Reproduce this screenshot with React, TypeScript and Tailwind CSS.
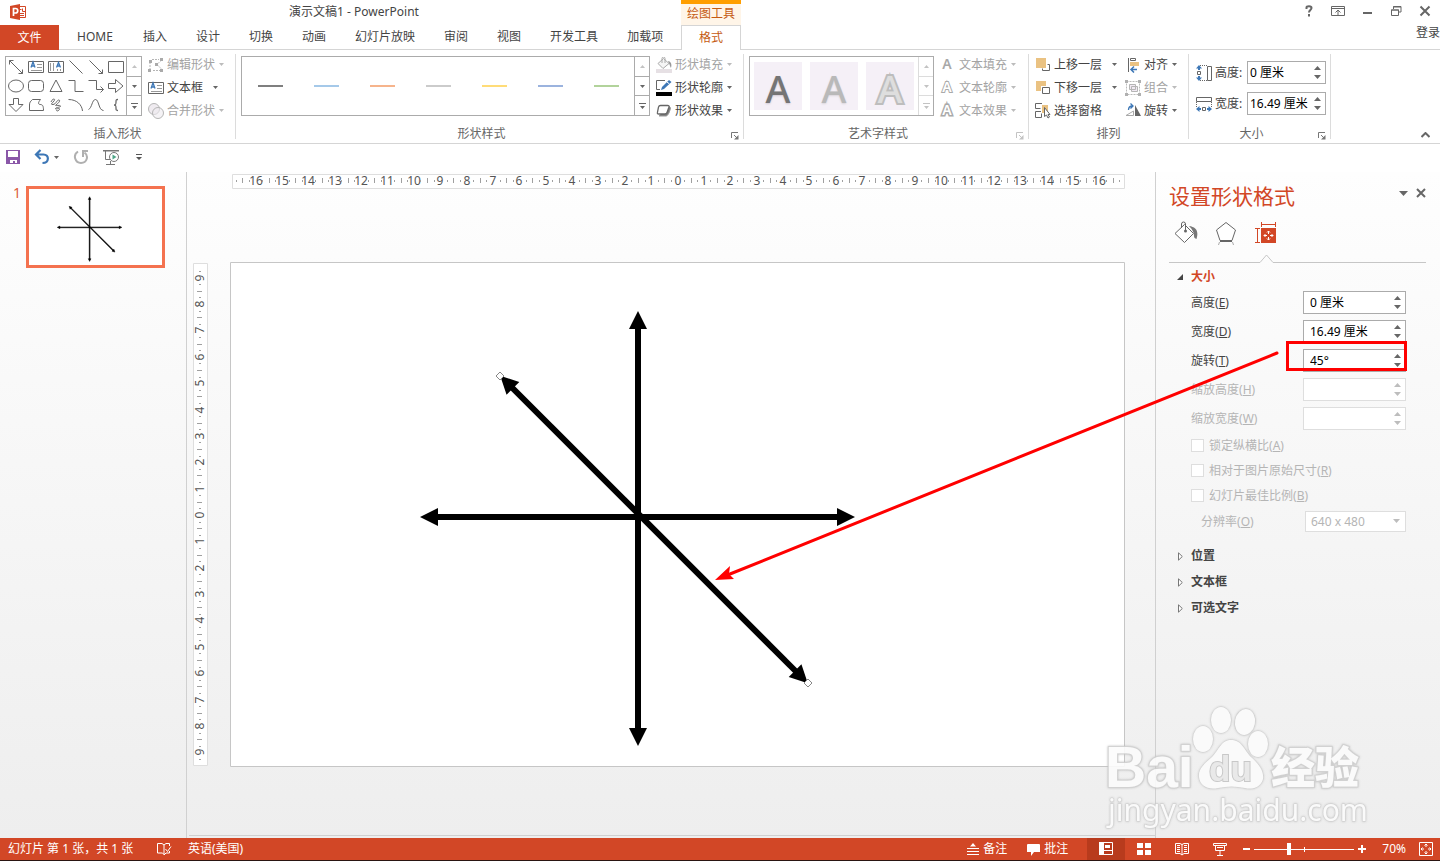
import { useState } from "react";
import type { ReactNode } from "react";

/* ---------- small shared pieces ---------- */

const Caret = ({ disabled }: { disabled?: boolean }) => (
  <svg width="5" height="3" viewBox="0 0 5 3" className={disabled ? "text-[#bcbcbc]" : "text-[#666]"}>
    <path d="M0 0h5L2.5 3z" fill="currentColor" />
  </svg>
);

interface ToolButtonProps {
  icon: ReactNode;
  label: string;
  disabled?: boolean;
  menu?: boolean;
  wide?: boolean;
}

const ToolButton = ({ icon, label, disabled, menu = true, wide }: ToolButtonProps) => (
  <button
    type="button"
    disabled={disabled}
    className={`flex h-[23px] items-center whitespace-nowrap ${disabled ? "text-[#a3a3a3]" : "text-[#444]"}`}
  >
    <span className="mr-[3px] flex w-4 justify-center">{icon}</span>
    <span>{label}</span>
    {menu && (
      <span className={wide ? "ml-2.5" : "ml-1"}>
        <Caret disabled={disabled} />
      </span>
    )}
  </button>
);

const Launcher = ({ disabled }: { disabled?: boolean }) => (
  <button type="button" aria-label="更多选项" disabled={disabled} className="flex w-4 items-center justify-center pt-1">
    <svg width="8" height="8" viewBox="0 0 8 8" fill="none" stroke={disabled ? "#c3c3c3" : "#777"}>
      <path d="M.5 6V.5H7M3 3l3 3" />
      <path d="M7.500 3v4.500H3z" fill={disabled ? "#c3c3c3" : "#777"} stroke="none" />
    </svg>
  </button>
);

interface GroupProps {
  title: string;
  className: string;
  launcher?: "on" | "off";
  children: ReactNode;
}

const Group = ({ title, className, launcher, children }: GroupProps) => (
  <>
    <section className={`flex shrink-0 flex-col ${className}`}>
      <div className="flex h-[74px] items-start pl-[5px]">{children}</div>
      <div className="flex h-[19px]">
        <h2 className="flex flex-1 items-center justify-center text-[#666]">{title}</h2>
        {launcher && <Launcher disabled={launcher === "off"} />}
      </div>
    </section>
    <div className="my-1 w-px shrink-0 bg-[#dcdcdc]" />
  </>
);

const scrollCell = "flex flex-1 items-center justify-center";

const GalleryScroll = ({ disabled }: { disabled?: boolean }) => {
  const line = disabled ? "border-[#dcdcdc]" : "border-[#ababab]";
  const fill = disabled ? "#c3c3c3" : "#666";
  return (
    <div className={`flex w-[15px] shrink-0 flex-col border-l ${line}`}>
      <button type="button" aria-label="上一行" disabled className={scrollCell}>
        <svg width="5" height="3" viewBox="0 0 5 3">
          <path d="M0 3h5L2.500 0z" fill="#c3c3c3" />
        </svg>
      </button>
      <button type="button" aria-label="下一行" disabled={disabled} className={`border-y ${scrollCell} ${line}`}>
        <svg width="5" height="3" viewBox="0 0 5 3">
          <path d="M0 0h5L2.500 3z" fill={fill} />
        </svg>
      </button>
      <button type="button" aria-label="其他" disabled={disabled} className={scrollCell}>
        <svg width="7" height="6" viewBox="0 0 7 6" fill={fill}>
          <path d="M0 0h7v1H0zM1 3h5L3.500 6z" />
        </svg>
      </button>
    </div>
  );
};

interface SpinnerProps {
  id: string;
  label: string;
  initial: string;
  disabled?: boolean;
  size: string;
}

const Spinner = ({ id, label, initial, disabled, size }: SpinnerProps) => {
  const [value, setValue] = useState(initial);
  const color = disabled ? "text-[#bdbdbd]" : "text-[#666]";
  return (
    <div className={`flex h-[23px] border bg-white ${size} ${disabled ? "border-[#dedede]" : "border-[#ababab]"}`}>
      <input
        id={id}
        value={value}
        disabled={disabled}
        onChange={(e) => setValue(e.target.value)}
        className="min-w-0 flex-1 bg-transparent text-black outline-none"
      />
      <div className={`flex w-4 flex-col items-center justify-center gap-[5px] ${color}`}>
        <button type="button" aria-label={`${label} 增加`} disabled={disabled}>
          <svg width="7" height="4" viewBox="0 0 7 4" className="block">
            <path d="M0 4h7L3.500 0z" fill="currentColor" />
          </svg>
        </button>
        <button type="button" aria-label={`${label} 减少`} disabled={disabled}>
          <svg width="7" height="4" viewBox="0 0 7 4" className="block">
            <path d="M0 0h7L3.500 4z" fill="currentColor" />
          </svg>
        </button>
      </div>
    </div>
  );
};

/* ---------- icons ---------- */

const Svg = ({ children }: { children: ReactNode }) => (
  <svg width="16" height="16" viewBox="0 0 16 16" fill="none" stroke="#666" className="block">
    {children}
  </svg>
);

const letterA = "M3 8.500l2-5.500 2 5.500M3.800 7h2.500";

const TextBoxIcon = () => (
  <Svg>
    <path d="M.5 2.500h15v11H.5z" fill="#fff" />
    <path d={letterA} stroke="#3d77b6" strokeWidth="1.300" />
    <path d="M9 5.500h5M9 8.500h5M3 11.500h11" stroke="#999" />
  </Svg>
);

const shapes: { name: string; art: ReactNode }[] = [
  { name: "双箭头", art: <path d="M1.500 1.500l13 13M1.500 5.500v-4h4M14.500 10.500v4h-4" /> },
  {
    name: "文本框",
    art: (
      <>
        <path d="M.5 2.500h15v11H.5z" />
        <path d={letterA} stroke="#3d77b6" strokeWidth="1.300" />
        <path d="M9 5.500h5M9 8.500h5M3 11.500h11" stroke="#999" />
      </>
    ),
  },
  {
    name: "竖排文本框",
    art: (
      <>
        <path d="M.5 2.500h15v11H.5z" />
        <path d="M8.500 8.500l2-5 2 5M9.300 7h2.500" stroke="#3d77b6" strokeWidth="1.300" />
        <path d="M2.500 4v8M5.500 4v8M9.500 10v2M12.500 10v2" stroke="#999" />
      </>
    ),
  },
  { name: "直线", art: <path d="M1.500 1.500l13 13" /> },
  { name: "箭头", art: <path d="M1.500 1.500l13 13M14.500 10.500v4h-4" /> },
  { name: "矩形", art: <path d="M.5 2.500h15v11H.5z" /> },
  { name: "椭圆", art: <ellipse cx="8" cy="8" rx="7.500" ry="6" /> },
  { name: "圆角矩形", art: <rect x=".5" y="2.500" width="15" height="11" rx="3" /> },
  { name: "三角形", art: <path d="M8 2L14 13.500H2z" /> },
  { name: "肘形连接符", art: <path d="M.5 2.500H7v11h8.500" /> },
  { name: "肘形箭头", art: <path d="M.5 2.500h8v9h7M12.500 8.500l3 3-3 3" /> },
  { name: "右箭头", art: <path d="M.5 5.500h7v-4L15 8l-7.500 6.500v-4h-7z" /> },
  { name: "下箭头", art: <path d="M5.500 1.500h5v6H15L8 14.500 1 7.500h4.500z" /> },
  {
    name: "任意多边形",
    art: <path d="M4.500 2.500h8c-2 2.500-3 4.500-.5 5 2.500 0 3.500 1 3.500 6H1.500V8c0-3 1-3.500 3-5.500z" />,
  },
  {
    name: "自由曲线",
    art: <path d="M3 5c1.500-4 5-3.500 3-1s-4 3.500-1 3.500 4-5 6-4.500-1 3.500-3 5 4-.5 4.500 1-4.500 1-5 2.500 4-1 4 .5-3 3-3 1" />,
  },
  { name: "弧形", art: <path d="M.5 2.500C9 2.500 14 8 14.500 14" /> },
  { name: "曲线", art: <path d="M.5 12.500C4 11 4 2.500 7.500 2.500s3 11 8 11" /> },
  { name: "左大括号", art: <path d="M10 2.500c-2 0-2 .5-2 2.500s0 3-2 3c2 0 2 1 2 3s0 2.500 2 2.500" strokeWidth="1.300" /> },
];

const EditShapeIcon = () => (
  <Svg>
    <path d="M2 5v7M4 2.500h7M5 13.500h7M13.500 3L9 7.500l5 5" stroke="#b5b5b5" strokeDasharray="2 1" />
    <path d="M1 3h3v3H1zM12 1h3v3h-3zM0 12h3v3H0zM12 12h3v3h-3zM7 6h3v3H7z" fill="#aaa" stroke="none" />
  </Svg>
);

const MergeIcon = () => (
  <Svg>
    <circle cx="6" cy="6" r="5.500" fill="#efebf0" stroke="#b5b5b5" />
    <circle cx="10" cy="10" r="5.500" fill="#efebf0" fillOpacity=".6" stroke="#b5b5b5" />
  </Svg>
);

const FillIcon = () => (
  <Svg>
    <path d="M7.500 1.500l5.500 5-6 5-5-5z" stroke="#aaa" fill="#f5f5f5" />
    <path d="M6 6V1.500a1.500 1.500 0 013 0V6" stroke="#aaa" />
    <path d="M12 4c3 .5 4 3 3 7-1-1.500-1.500-4-3-7z" fill="#999" stroke="none" />
    <path d="M0 12h16v4H0z" fill="#e6e0e4" stroke="none" />
  </Svg>
);

const OutlineIcon = () => (
  <Svg>
    <path d="M9 .5H.5v9H4" />
    <path d="M5 10l1-3 7-7 2.500 2L8 9z" fill="#3d77b6" stroke="none" />
    <path d="M11 2l2.500 2" stroke="#fff" />
    <path d="M0 12h16v4H0z" fill="#000" stroke="none" />
  </Svg>
);

const EffectIcon = () => (
  <Svg>
    <path d="M3 13h7c2 0 4-5 4.500-8L13 3z" fill="#777" stroke="#999" />
    <path d="M4.500 2.500h7c1.500 0 1.800.6 1.400 1.800l-1.800 5c-.4 1.200-1 1.700-2.200 1.700h-6c-1.500 0-1.800-.6-1.400-1.800l1-5c.3-1.200.8-1.700 2-1.700z" fill="#fff" strokeWidth="1.300" />
  </Svg>
);

const TextArtIcon = ({ variant }: { variant: "fill" | "outline" | "effect" }) => (
  <svg width="14" height="14" viewBox="0 0 14 14" className="block overflow-visible">
    <text
      x="6"
      y="11"
      fontSize="14"
      textAnchor="middle"
      fontWeight="600"
      paintOrder="stroke"
      fill={variant === "fill" ? "#a8a8a8" : "#fff"}
      stroke={variant === "fill" ? "none" : "#aaa"}
      strokeWidth={variant === "effect" ? 3 : 2}
    >
      A
    </text>
  </svg>
);

const ForwardIcon = () => (
  <Svg>
    <path d="M12.500 7.500h2v6h-7v-2" />
    <path d="M1 1h10v10H1z" fill="#eac282" stroke="none" />
  </Svg>
);

const BackwardIcon = () => (
  <Svg>
    <path d="M1 1h10v5H6v5H1z" fill="#eac282" stroke="none" />
    <path d="M7.500 7.500h7v6h-7z" fill="#fff" />
  </Svg>
);

const SelectPaneIcon = () => (
  <Svg>
    <path d="M7 2h6v8H7z" fill="#eac282" stroke="none" />
    <path d="M7 .5H.5v5h5M6 8.500H.5v6h6v-4" />
    <path d="M9.500 4.500v9l2-1.500 1.500 3 1.500-1-1.500-2.500H15z" fill="#fff" />
  </Svg>
);

const AlignIcon = () => (
  <Svg>
    <path d="M3.500 1v14M5.500 1.500h5v2h-5z" />
    <path d="M5 5h9v4H5z" fill="#eac282" stroke="none" />
    <path d="M12 12.500H6.500M9 9.500l-3 3 3 3" stroke="#3d77b6" strokeWidth="1.500" />
  </Svg>
);

const CombineIcon = () => (
  <Svg>
    <path d="M1.500 1.500h13v13h-13z" stroke="#bbb" strokeDasharray="2 1" />
    <path d="M4.500 4.500h6v5h-6zM6.500 6.500h6v5h-6z" fill="#f1e9f3" stroke="#b5b5b5" />
    <path d="M0 0h3v3H0zM13 0h3v3h-3zM0 13h3v3H0zM13 13h3v3h-3z" fill="#b0b0b0" stroke="none" />
  </Svg>
);

const RotateIcon = () => (
  <Svg>
    <path d="M10 13V2l6 11z" fill="#666" stroke="none" />
    <path d="M8.500 8v4.500H1z" stroke="#aaa" />
    <path d="M3.500 7c0-3 1-4 4-4M5.500.5L8 3 5.500 5.500" stroke="#3d77b6" strokeWidth="1.300" />
  </Svg>
);

const HeightIcon = () => (
  <Svg>
    <path d="M11.500 1.500h4v14h-4z" />
    <path d="M4 .5h7M4 15.500h7" strokeDasharray="1 1" />
    <path d="M1.500 6.500h3v3h-3z" />
    <path d="M3 0l3 3.500H4V5H2V3.500H0zM3 16l3-3.500H4V11H2v1.500H0z" fill="#3d77b6" stroke="none" />
  </Svg>
);

const WidthIcon = () => (
  <Svg>
    <path d="M.5 1.500h15v4H.5z" />
    <path d="M.5 6v6M15.500 6v6" strokeDasharray="1 1" />
    <path d="M6.500 11.500h3v3h-3z" />
    <path d="M0 13l3.500-3v2H5v2H3.500v2zM16 13l-3.500-3v2H11v2h1.500v2z" fill="#3d77b6" stroke="none" />
  </Svg>
);

/* ---------- title bar and tabs ---------- */

const windowButtons: { name: string; art: ReactNode }[] = [
  {
    name: "帮助",
    art: <path d="M5.500 6V4.500C5.500 3 10.500 2.500 10.500 5c0 2-2.500 2-2.500 4.500M8 11v2.500" strokeWidth="2" />,
  },
  {
    name: "功能区显示选项",
    art: <path d="M1.500 3.500h13v9h-13zM1.500 5.500h13M8 12V7.500M5.500 9.500L8 7l2.500 2.500" />,
  },
  { name: "最小化", art: <path d="M4 10h9" strokeWidth="2" /> },
  { name: "还原", art: <path d="M3.500 7h7v5.500h-7zM3 7h8M5.500 6V3.500h7.500V9h-2M5 4h8" /> },
  { name: "关闭", art: <path d="M3.500 3.500l9 9M12.500 3.500l-9 9" strokeWidth="2" /> },
];

const tabs = ["插入", "设计", "切换", "动画", "幻灯片放映", "审阅", "视图", "开发工具", "加载项"];

const Header = () => (
  <header>
    <div className="flex h-[25px]">
      <div className="flex w-[681px] shrink-0 items-center pb-0.5 pl-[10px]">
        <svg width="17" height="16" viewBox="0 0 17 16">
          <path d="M9 2.500h6.500v11H9" fill="#fff" stroke="#d24726" />
          <path d="M10 5.500h1.500M12.500 4.500v3H15M10 9.500h4M10 11.500h4" fill="none" stroke="#d24726" />
          <path d="M0 2l10-2v16L0 14z" fill="#d24726" />
          <path d="M3.500 12V4.500h2a2 2 0 010 4.500h-2" fill="none" stroke="#fff" strokeWidth="1.700" />
        </svg>
        <h1 className="flex-1 text-center text-[#444]">演示文稿1 - PowerPoint</h1>
      </div>
      <div className="flex w-[60px] shrink-0 items-center justify-center border-t-4 border-[#ff9e00] bg-[#fff5e8] pb-0.5 text-[#c55a11]">
        绘图工具
      </div>
      <div className="mr-px ml-auto flex h-[22px]">
        {windowButtons.map((b) => (
          <button key={b.name} type="button" aria-label={b.name} className="flex w-[29px] items-center justify-center">
            <svg width="16" height="16" viewBox="0 0 16 16" fill="none" stroke="#666">
              {b.art}
            </svg>
          </button>
        ))}
      </div>
    </div>
    <nav className="flex h-[25px] text-[#444]">
      <div className="flex w-[681px] shrink-0 items-stretch gap-[29px] border-b border-[#d5d5d5]">
        <button type="button" className="-mr-3 -mb-px w-[59px] bg-[#d24726] text-white">
          文件
        </button>
        <button type="button" className="w-[38px]">
          HOME
        </button>
        {tabs.map((t) => (
          <button key={t} type="button" className="whitespace-nowrap">
            {t}
          </button>
        ))}
      </div>
      <button type="button" className="w-[60px] shrink-0 border-x border-t border-[#d5d5d5] text-[#c55a11]">
        格式
      </button>
      <div className="flex flex-1 items-start justify-end border-b border-[#d5d5d5]">
        <a href="#signin">登录</a>
      </div>
    </nav>
  </header>
);

/* ---------- ribbon ---------- */

const lineStyles = [
  "bg-[#7f7f7f]",
  "bg-[#a5c9e9]",
  "bg-[#f6b48c]",
  "bg-[#cbcbcb]",
  "bg-[#ffdc78]",
  "bg-[#9bb3de]",
  "bg-[#b2d39b]",
];

const artStyles = [
  "text-[#757575] [text-shadow:0_1px_2px_#d0c8d2]",
  "text-[#b9b9b9] [text-shadow:0_1px_2px_#d8d4da]",
  "text-[#dedede] [-webkit-text-stroke:4px_#bdbdbd] [paint-order:stroke_fill]",
];

const Ribbon = () => (
  <div className="flex h-[94px] border-b border-[#d5d5d5]">
    <Group title="插入形状" className="w-[235px]">
      <div className="mt-1.5 mr-1.5 flex h-[60px] w-[137px] border border-[#ababab]">
        <div className="grid flex-1 grid-cols-6 place-items-center">
          {shapes.map((s) => (
            <button key={s.name} type="button" aria-label={s.name}>
              <Svg>{s.art}</Svg>
            </button>
          ))}
        </div>
        <GalleryScroll />
      </div>
      <div className="mt-[3px]">
        <ToolButton icon={<EditShapeIcon />} label="编辑形状" disabled />
        <ToolButton icon={<TextBoxIcon />} label="文本框" wide />
        <ToolButton icon={<MergeIcon />} label="合并形状" disabled />
      </div>
    </Group>

    <Group title="形状样式" className="w-[507px]" launcher="on">
      <div className="mt-1.5 mr-1.5 flex h-[60px] w-[409px] border border-[#ababab]">
        <div className="grid flex-1 grid-cols-7 place-items-center">
          {lineStyles.map((color, i) => (
            <button key={color} type="button" aria-label={`线条样式 ${i + 1}`} className={`h-0.5 w-[25px] ${color}`} />
          ))}
        </div>
        <GalleryScroll />
      </div>
      <div className="mt-[3px]">
        <ToolButton icon={<FillIcon />} label="形状填充" disabled />
        <ToolButton icon={<OutlineIcon />} label="形状轮廓" />
        <ToolButton icon={<EffectIcon />} label="形状效果" />
      </div>
    </Group>

    <Group title="艺术字样式" className="w-[284px]" launcher="off">
      <div className="mt-1.5 mr-1.5 flex h-[60px] w-[185px] border border-[#ababab]">
        <div className="flex flex-1 items-center gap-2 pl-1">
          {artStyles.map((style) => (
            <button
              key={style}
              type="button"
              disabled
              className={`h-12 w-12 bg-[#f5f0f7] pt-1 text-[38px] leading-[44px] font-medium ${style}`}
            >
              A
            </button>
          ))}
        </div>
        <GalleryScroll disabled />
      </div>
      <div className="mt-[3px]">
        <ToolButton icon={<TextArtIcon variant="fill" />} label="文本填充" disabled />
        <ToolButton icon={<TextArtIcon variant="outline" />} label="文本轮廓" disabled />
        <ToolButton icon={<TextArtIcon variant="effect" />} label="文本效果" disabled />
      </div>
    </Group>

    <Group title="排列" className="w-[159px]">
      <div className="mt-[3px] pl-px">
        <ToolButton icon={<ForwardIcon />} label="上移一层" wide />
        <ToolButton icon={<BackwardIcon />} label="下移一层" wide />
        <ToolButton icon={<SelectPaneIcon />} label="选择窗格" menu={false} />
      </div>
      <div className="mt-[3px] ml-2">
        <ToolButton icon={<AlignIcon />} label="对齐" />
        <ToolButton icon={<CombineIcon />} label="组合" disabled />
        <ToolButton icon={<RotateIcon />} label="旋转" />
      </div>
    </Group>

    <Group title="大小" className="w-[141px]" launcher="on">
      <div className="mt-[11px] flex flex-col gap-2 pl-0.5 text-[#444]">
        <div className="flex items-center">
          <HeightIcon />
          <label htmlFor="ribbon-height" className="ml-[3px] w-8">
            高度:
          </label>
          <Spinner id="ribbon-height" label="高度" initial="0 厘米" size="w-[79px] pl-[2px]" />
        </div>
        <div className="flex items-center">
          <WidthIcon />
          <label htmlFor="ribbon-width" className="ml-[3px] w-8">
            宽度:
          </label>
          <Spinner id="ribbon-width" label="宽度" initial="16.49 厘米" size="w-[79px] pl-[2px]" />
        </div>
      </div>
    </Group>

    <div className="flex flex-1 items-end justify-end">
      <button type="button" aria-label="折叠功能区" className="flex h-4 w-[29px] items-center justify-center">
        <svg width="9" height="6" viewBox="0 0 9 6" fill="none" stroke="#666" strokeWidth="2">
          <path d="M.5 5l4-4 4 4" />
        </svg>
      </button>
    </div>
  </div>
);

const QuickAccess = () => (
  <div className="flex h-7 items-center pb-0.5 pl-[5px]">
    <button type="button" aria-label="保存">
      <Svg>
        <path d="M1 1h14v14H1z" fill="#8a57a8" stroke="none" />
        <path d="M3 2h10v6H3zM5 11h7v3h-2v-2H8v2H5z" fill="#fff" stroke="none" />
      </Svg>
    </button>
    <button type="button" aria-label="撤消" className="ml-[13px] flex items-center gap-1">
      <svg width="16" height="16" viewBox="0 0 16 16" fill="none" stroke="#3d77b6" strokeWidth="2.200">
        <path d="M6.500 1L2 5.500 6.500 10M2 5.500h7.500c6 0 6 8.500-1 8.500" />
      </svg>
      <Caret />
    </button>
    <button type="button" aria-label="重复" className="ml-[14px]">
      <svg width="16" height="16" viewBox="0 0 16 16" fill="none" stroke="#b0b0b0" strokeWidth="2">
        <path d="M5 2.500C-.5 6 2 14 8 14s8-7 3.500-10.500M10 8V2h5" />
      </svg>
    </button>
    <button type="button" aria-label="从头开始放映" className="ml-[14px]">
      <svg width="17" height="16" viewBox="0 0 17 16" fill="none" stroke="#777">
        <path d="M0 1h16v1.500H0z" fill="#777" stroke="none" />
        <path d="M2.500 2v8.500h5M3 15.500h9M7.500 15V12" />
        <circle cx="11" cy="8" r="4.500" fill="#fff" />
        <path d="M9.500 5.500v5L13.500 8z" fill="#4ea587" stroke="none" />
      </svg>
    </button>
    <button type="button" aria-label="自定义快速访问工具栏" className="ml-4">
      <svg width="6" height="7" viewBox="0 0 6 7" fill="#555">
        <path d="M0 0h6v1H0zM0 3h6L3 6z" />
      </svg>
    </button>
  </div>
);

/* ---------- slide and rulers ---------- */

const axes = [
  { x: 408, y: 266.5, angle: 90 },
  { x: 407.5, y: 255, angle: 0 },
  { x: 424, y: 267.5, angle: 45 },
];

const SlideDrawing = () => (
  <>
    {axes.map((a) => (
      <g key={a.angle} transform={`translate(${a.x} ${a.y}) rotate(${a.angle})`}>
        <path d="M-204-3H204V3H-204z" />
        <path d="M-217.500 0l18-9v18zM217.500 0l-18-9v18z" />
      </g>
    ))}
  </>
);

const CM = 26.37;

interface RulerProps {
  length: number;
  max: number;
  vertical?: boolean;
}

const Ruler = ({ length, max, vertical }: RulerProps) => {
  const center = vertical ? 252 : 445.5;
  const marks = Array.from({ length: (max * 2 + 2) * 4 + 1 }, (_, i) => i / 4 - max - 1);
  return (
    <svg
      viewBox={vertical ? `0 0 15 ${length}` : `0 0 ${length} 15`}
      className="block w-full overflow-visible"
      fill="#555"
      fontSize="12"
      textAnchor="middle"
    >
      <path d={vertical ? `M.5.5h14v${length - 1}H.5z` : `M.5.5h${length - 1}v14H.5z`} fill="#fff" stroke="#dedede" />
      {marks.map((m) => {
        const pos = Math.round(center + m * CM);
        if (pos < 2 || pos > length - 2) return null;
        if (Number.isInteger(m)) {
          return vertical ? (
            <text key={m} transform={`translate(11 ${pos}) rotate(-90)`}>
              {Math.abs(m)}
            </text>
          ) : (
            <text key={m} x={pos} y="11">
              {Math.abs(m)}
            </text>
          );
        }
        const half = Math.abs(m % 1) === 0.5;
        const size = half ? 5 : 2;
        const start = half ? 4 : 6;
        return vertical ? (
          <rect key={m} x={start} y={pos} width={size} height="1" fill="#a0a0a0" />
        ) : (
          <rect key={m} x={pos} y={start} width="1" height={size} fill="#a0a0a0" />
        );
      })}
    </svg>
  );
};

const Workspace = () => (
  <main className="min-w-0 flex-1 pb-0.5 pl-0.5">
    <div className="flex h-full flex-col gap-[73px] border-b border-[#d0d0d0] pt-0.5 pr-[30px] pl-1">
      <div className="pl-[39px]">
        <Ruler length={893} max={16} />
      </div>
      <div className="flex items-start gap-[22px]">
        <div className="w-[15px] shrink-0 pt-px">
          <Ruler length={503} max={9} vertical />
        </div>
        <svg viewBox="0 0 895 505" className="block min-w-0 flex-1">
          <path d="M.5.5h894v504H.5z" fill="#fff" stroke="#c6c6c6" />
          <SlideDrawing />
          <path d="M270 110l4 4-4 4-4-4zM578 417l4 4-4 4-4-4z" fill="#fff" stroke="#888" />
        </svg>
      </div>
    </div>
  </main>
);

const Thumbnails = () => (
  <aside className="flex w-[187px] shrink-0 items-start border-r border-[#d0d0d0] pt-[14px] pl-[13px]">
    <span className="w-[13px] text-sm leading-[14px] text-[#dc5b3c]">1</span>
    <button type="button" aria-label="幻灯片 1" className="border-3 border-[#f4724f] bg-white">
      <svg width="133" height="76" viewBox="0 0 895 505" className="block" stroke="#000" strokeWidth="3">
        <SlideDrawing />
      </svg>
    </button>
  </aside>
);

/* ---------- format pane ---------- */

interface Field {
  id: string;
  label: string;
  hotkey: string;
  value: string;
  disabled?: boolean;
  marked?: boolean;
}

const fields: Field[] = [
  { id: "height", label: "高度", hotkey: "E", value: "0 厘米" },
  { id: "width", label: "宽度", hotkey: "D", value: "16.49 厘米" },
  { id: "rotation", label: "旋转", hotkey: "T", value: "45°", marked: true },
  { id: "scale-height", label: "缩放高度", hotkey: "H", value: "", disabled: true },
  { id: "scale-width", label: "缩放宽度", hotkey: "W", value: "", disabled: true },
];

const checks = [
  { id: "lock-ratio", label: "锁定纵横比", hotkey: "A" },
  { id: "relative", label: "相对于图片原始尺寸", hotkey: "R" },
  { id: "best-scale", label: "幻灯片最佳比例", hotkey: "B" },
];

const Hotkey = ({ text, hotkey }: { text: string; hotkey: string }) => (
  <>
    {text}(<u>{hotkey}</u>)
  </>
);

const FormatPane = () => (
  <aside className="w-[285px] shrink-0 border-l border-[#d0d0d0] pr-[14px] pl-[13px] text-[#444]">
    <div className="mt-1 flex h-10 items-center justify-between">
      <h2 className="text-[21px] leading-10 text-[#d24726]">设置形状格式</h2>
      <div className="mb-1.5 flex items-center gap-2 pl-px">
        <button type="button" aria-label="任务窗格选项">
          <svg width="9" height="5" viewBox="0 0 9 5" className="block" fill="#666">
            <path d="M0 0h9L4.500 5z" />
          </svg>
        </button>
        <button type="button" aria-label="关闭窗格">
          <svg width="10" height="10" viewBox="0 0 10 10" className="block" stroke="#666" strokeWidth="2">
            <path d="M1 1l8 8M9 1L1 9" />
          </svg>
        </button>
      </div>
    </div>
    <div className="mt-1 flex h-[26px] items-center gap-4 pl-[5px]">
      <button type="button" aria-label="填充与线条">
        <svg width="24" height="24" viewBox="0 0 24 24" fill="none" stroke="#666">
          <path d="M10.500 3.500l9 9-9 9-9.500-9z" fill="#fff" />
          <path d="M7.500 7V3a2 2 0 014 0v6" />
          <circle cx="11.500" cy="10" r="1.500" fill="#666" stroke="none" />
          <path d="M15 5c7 1 10 5 7.500 13-1.500-.5-2.500-1-2.500-3 0-3-1-6-5-10z" fill="#777" stroke="none" />
        </svg>
      </button>
      <button type="button" aria-label="效果">
        <svg width="24" height="24" viewBox="0 0 24 24" fill="none" stroke="#666">
          <path d="M12 1.500l9.500 7.500-3.500 10.500H6L2.500 9z" fill="#fff" />
          <path d="M6 20h12" strokeWidth="2" />
          <path d="M5.500 21l-1 3M18.500 21l1 3" stroke="#aaa" />
        </svg>
      </button>
      <button type="button" aria-label="大小与属性">
        <svg width="24" height="24" viewBox="0 0 24 24" fill="none" stroke="#d24726">
          <path d="M7 7h15v15H7z" fill="#d24726" stroke="none" />
          <path d="M7.500 1v5M21.500 1v5M8 3.500h13M1 7.500h5M1 21.500h5M3.500 8v13" />
          <path
            d="M14.500 10v3M14.500 16v3M10 14.500h3M16 14.500h3M13 11.500l1.500-1.500 1.500 1.500M13 17.500l1.500 1.500 1.500-1.500M11.500 13L10 14.500l1.500 1.500M17.500 13l1.500 1.500-1.500 1.500"
            stroke="#fff"
          />
        </svg>
      </button>
    </div>
    <div className="mt-2 flex h-[9px] items-end">
      <div className="h-px w-[91px] bg-[#c6c6c6]" />
      <svg width="13" height="9" viewBox="0 0 13 9" fill="none" stroke="#c6c6c6">
        <path d="M0 8.500l6.500-7.500 6.500 7.500" />
      </svg>
      <div className="h-px flex-1 bg-[#c6c6c6]" />
    </div>

    <button type="button" className="flex h-6 items-center gap-2 pt-1 pl-2 font-bold text-[#d24726]">
      <svg width="6" height="6" viewBox="0 0 6 6" fill="#444">
        <path d="M6 0v6H0z" />
      </svg>
      大小
    </button>
    <div className="pt-px pr-5 pl-[22px]">
      {fields.map((f) => (
        <div
          key={f.id}
          className={`relative flex h-[29px] items-center justify-between ${f.disabled ? "text-[#b5b5b5]" : ""}`}
        >
          <label htmlFor={f.id}>
            <Hotkey text={f.label} hotkey={f.hotkey} />
          </label>
          <Spinner id={f.id} label={f.label} initial={f.value} disabled={f.disabled} size="w-[103px] pl-1.5" />
          {f.marked && (
            <div className="pointer-events-none absolute -top-[5px] -right-px h-[30px] w-[121px] border-3 border-[#ff0000]" />
          )}
        </div>
      ))}
      {checks.map((c) => (
        <div key={c.id} className="flex h-[25px] items-center gap-[5px] text-[#b5b5b5]">
          <input
            id={c.id}
            type="checkbox"
            disabled
            className="h-[13px] w-[13px] appearance-none border border-[#dedede] bg-white"
          />
          <label htmlFor={c.id}>
            <Hotkey text={c.label} hotkey={c.hotkey} />
          </label>
        </div>
      ))}
      <div className="flex h-[27px] items-center justify-between pl-2.5 text-[#b5b5b5]">
        <label htmlFor="resolution">
          <Hotkey text="分辨率" hotkey="O" />
        </label>
        <div className="relative">
          <select
            id="resolution"
            disabled
            className="block h-[21px] w-[101px] appearance-none border border-[#dedede] bg-white pl-[5px] opacity-100"
          >
            <option>640 x 480</option>
          </select>
          <svg
            width="7"
            height="4"
            viewBox="0 0 7 4"
            className="pointer-events-none absolute top-2 right-1.5"
            fill="#bdbdbd"
          >
            <path d="M0 0h7L3.500 4z" />
          </svg>
        </div>
      </div>
    </div>
    <div className="mt-2">
      {["位置", "文本框", "可选文字"].map((s) => (
        <button key={s} type="button" className="flex h-[26px] items-center gap-2 pl-[9px] font-bold">
          <svg width="5" height="9" viewBox="0 0 5 9" fill="#fff" stroke="#777">
            <path d="M.5.8L4.300 4.500.5 8.200z" />
          </svg>
          {s}
        </button>
      ))}
    </div>
  </aside>
);

/* ---------- overlays ---------- */

const PointerArrow = () => (
  <svg
    width="574"
    height="245"
    viewBox="0 0 574 245"
    className="pointer-events-none absolute top-[173px] right-[156px]"
    fill="#ff0000"
  >
    <path d="M567 8L20 229" stroke="#ff0000" strokeWidth="3" strokeLinecap="round" />
    <path d="M5 235l15-14-1 8 5 5z" />
  </svg>
);

const Watermark = () => (
  <svg
    width="270"
    height="132"
    viewBox="0 0 270 132"
    className="pointer-events-none absolute right-[70px] bottom-1.5 overflow-visible opacity-90 drop-shadow-[0_0_1px_#bbb]"
    fill="#fcfcfc"
    stroke="#cfcfcf"
    paintOrder="stroke"
  >
    <text x="5" y="87" fontSize="57" fontWeight="700" strokeWidth="2" className="font-['Liberation_Sans']">
      Bai
    </text>
    <ellipse cx="103" cy="39" rx="10" ry="13" />
    <ellipse cx="121" cy="20" rx="10" ry="13" />
    <ellipse cx="145" cy="22" rx="10" ry="13" transform="rotate(10 145 22)" />
    <ellipse cx="158" cy="44" rx="10" ry="13" />
    <path d="M131 40c11 0 13 10 20 17 8 7 13 14 12 22-2 8-10 11-18 9-9-2-18-2-27 0-10 2-18-2-19-11-1-8 6-14 13-20 7-7 9-17 19-17z" />
    <text
      x="109"
      y="81"
      fontSize="35"
      fontWeight="700"
      fill="#e9e9e9"
      stroke="#c4c4c4"
      strokeWidth="2"
      className="font-['Liberation_Sans']"
    >
      du
    </text>
    <text x="171" y="84" fontSize="44" fontWeight="900" strokeWidth="2">
      经验
    </text>
    <text x="8" y="121" fontSize="30" strokeWidth="1">
      jingyan.baidu.com
    </text>
  </svg>
);

/* ---------- status bar ---------- */

const views: { name: string; art: ReactNode }[] = [
  {
    name: "普通视图",
    art: (
      <>
        <path d="M1.500 1.500h13v12h-13zM5.500 1.500v12M5 9.500h9" />
        <path d="M1 1h4v13H1zM7 4h5v3H7z" fill="#fff" stroke="none" />
      </>
    ),
  },
  { name: "幻灯片浏览", art: <path d="M1 2h6v5H1zM9 2h6v5H9zM1 9h6v5H1zM9 9h6v5H9z" fill="#fff" stroke="none" /> },
  {
    name: "阅读视图",
    art: (
      <path d="M8 3.500L6 2.500H1.500v10H6l2 1.500 2-1.500h4.500v-10H10zM8 3v11M3 4.500h3M3 6.500h3M3 8.500h3M3 10.500h3M10 4.500h3M10 6.500h3M10 8.500h3M10 10.500h3" />
    ),
  },
  { name: "幻灯片放映", art: <path d="M1.500 2.500h13v2h-13zM3.500 4.500v5h9v-5M8 10v4M5 14.500h6M5 6.500h6" /> },
];

const StatusBar = () => {
  const [zoom, setZoom] = useState(34);
  return (
    <footer className="flex h-[23px] shrink-0 items-center border-b border-[#2a1512] bg-[#d24726] pl-2 whitespace-nowrap text-white">
      <span className="w-[149px]">幻灯片 第 1 张，共 1 张</span>
      <button type="button" aria-label="拼写检查" className="w-[31px]">
        <svg width="15" height="14" viewBox="0 0 15 14" fill="none" stroke="#fff">
          <path d="M7 12.500L5.500 11H.5V1.500H5L7 3l2-1.500h3.500V4M7 3v10l2-2h3.500V9M8.500 7l2 2.500L14 4.500" />
        </svg>
      </button>
      <span>英语(美国)</span>
      <div className="ml-auto flex h-full items-center">
        <button type="button" className="flex items-center gap-1">
          <svg width="12" height="12" viewBox="0 0 12 12" fill="#fff">
            <path d="M6 0l3 3.500H3zM0 5h12v1H0zM0 8h12v1H0zM0 11h12v1H0z" />
          </svg>
          备注
        </button>
        <button type="button" className="mr-[19px] ml-5 flex items-center gap-1">
          <svg width="13" height="13" viewBox="0 0 13 13" fill="#fff">
            <path d="M1 1h11a1 1 0 011 1v7H7l-3 4V9H0V2a1 1 0 011-1z" />
          </svg>
          批注
        </button>
        {views.map((v, i) => (
          <button
            key={v.name}
            type="button"
            aria-label={v.name}
            className={`flex h-full w-[38px] items-center justify-center ${i === 0 ? "bg-[#b83b1d]" : ""}`}
          >
            <svg width="16" height="16" viewBox="0 0 16 16" fill="none" stroke="#fff">
              {v.art}
            </svg>
          </button>
        ))}
        <button type="button" aria-label="缩小" className="ml-1 h-0.5 w-[7px] bg-white" />
        <div className="relative mx-1 flex items-center">
          <span className="absolute left-[50px] h-[5px] w-px bg-white" />
          <input
            type="range"
            aria-label="缩放"
            value={zoom}
            onChange={(e) => setZoom(Number(e.target.value))}
            className="relative h-px w-[100px] appearance-none bg-white [&::-webkit-slider-thumb]:h-3 [&::-webkit-slider-thumb]:w-1 [&::-webkit-slider-thumb]:appearance-none [&::-webkit-slider-thumb]:bg-white"
          />
        </div>
        <button type="button" aria-label="放大">
          <svg width="8" height="8" viewBox="0 0 8 8" className="block" fill="#fff">
            <path d="M3 0h2v3h3v2H5v3H3V5H0V3h3z" />
          </svg>
        </button>
        <button type="button" className="mr-[13px] ml-4">
          70%
        </button>
        <button type="button" aria-label="使幻灯片适应当前窗口" className="mr-[7px]">
          <svg width="14" height="14" viewBox="0 0 14 14" className="block" fill="none" stroke="#fff">
            <path d="M.5.5h13v13H.5zM7 2v3M7 9v3M2 7h3M9 7h3M5.500 3.500L7 2l1.500 1.500M5.500 10.500L7 12l1.500-1.500M3.500 5.500L2 7l1.500 1.500M10.500 5.500L12 7l-1.500 1.500" />
          </svg>
        </button>
      </div>
    </footer>
  );
};

const App = () => (
  <div className="flex min-h-screen flex-col overflow-hidden bg-white font-['Noto_Sans','Noto_Sans_CJK_SC',sans-serif] text-xs">
    <Header />
    <Ribbon />
    <QuickAccess />
    <div className="relative flex flex-1 bg-linear-to-b from-[#fefefe] to-[#eeeeee]">
      <Thumbnails />
      <Workspace />
      <FormatPane />
      <PointerArrow />
      <Watermark />
    </div>
    <StatusBar />
  </div>
);

export default App;
